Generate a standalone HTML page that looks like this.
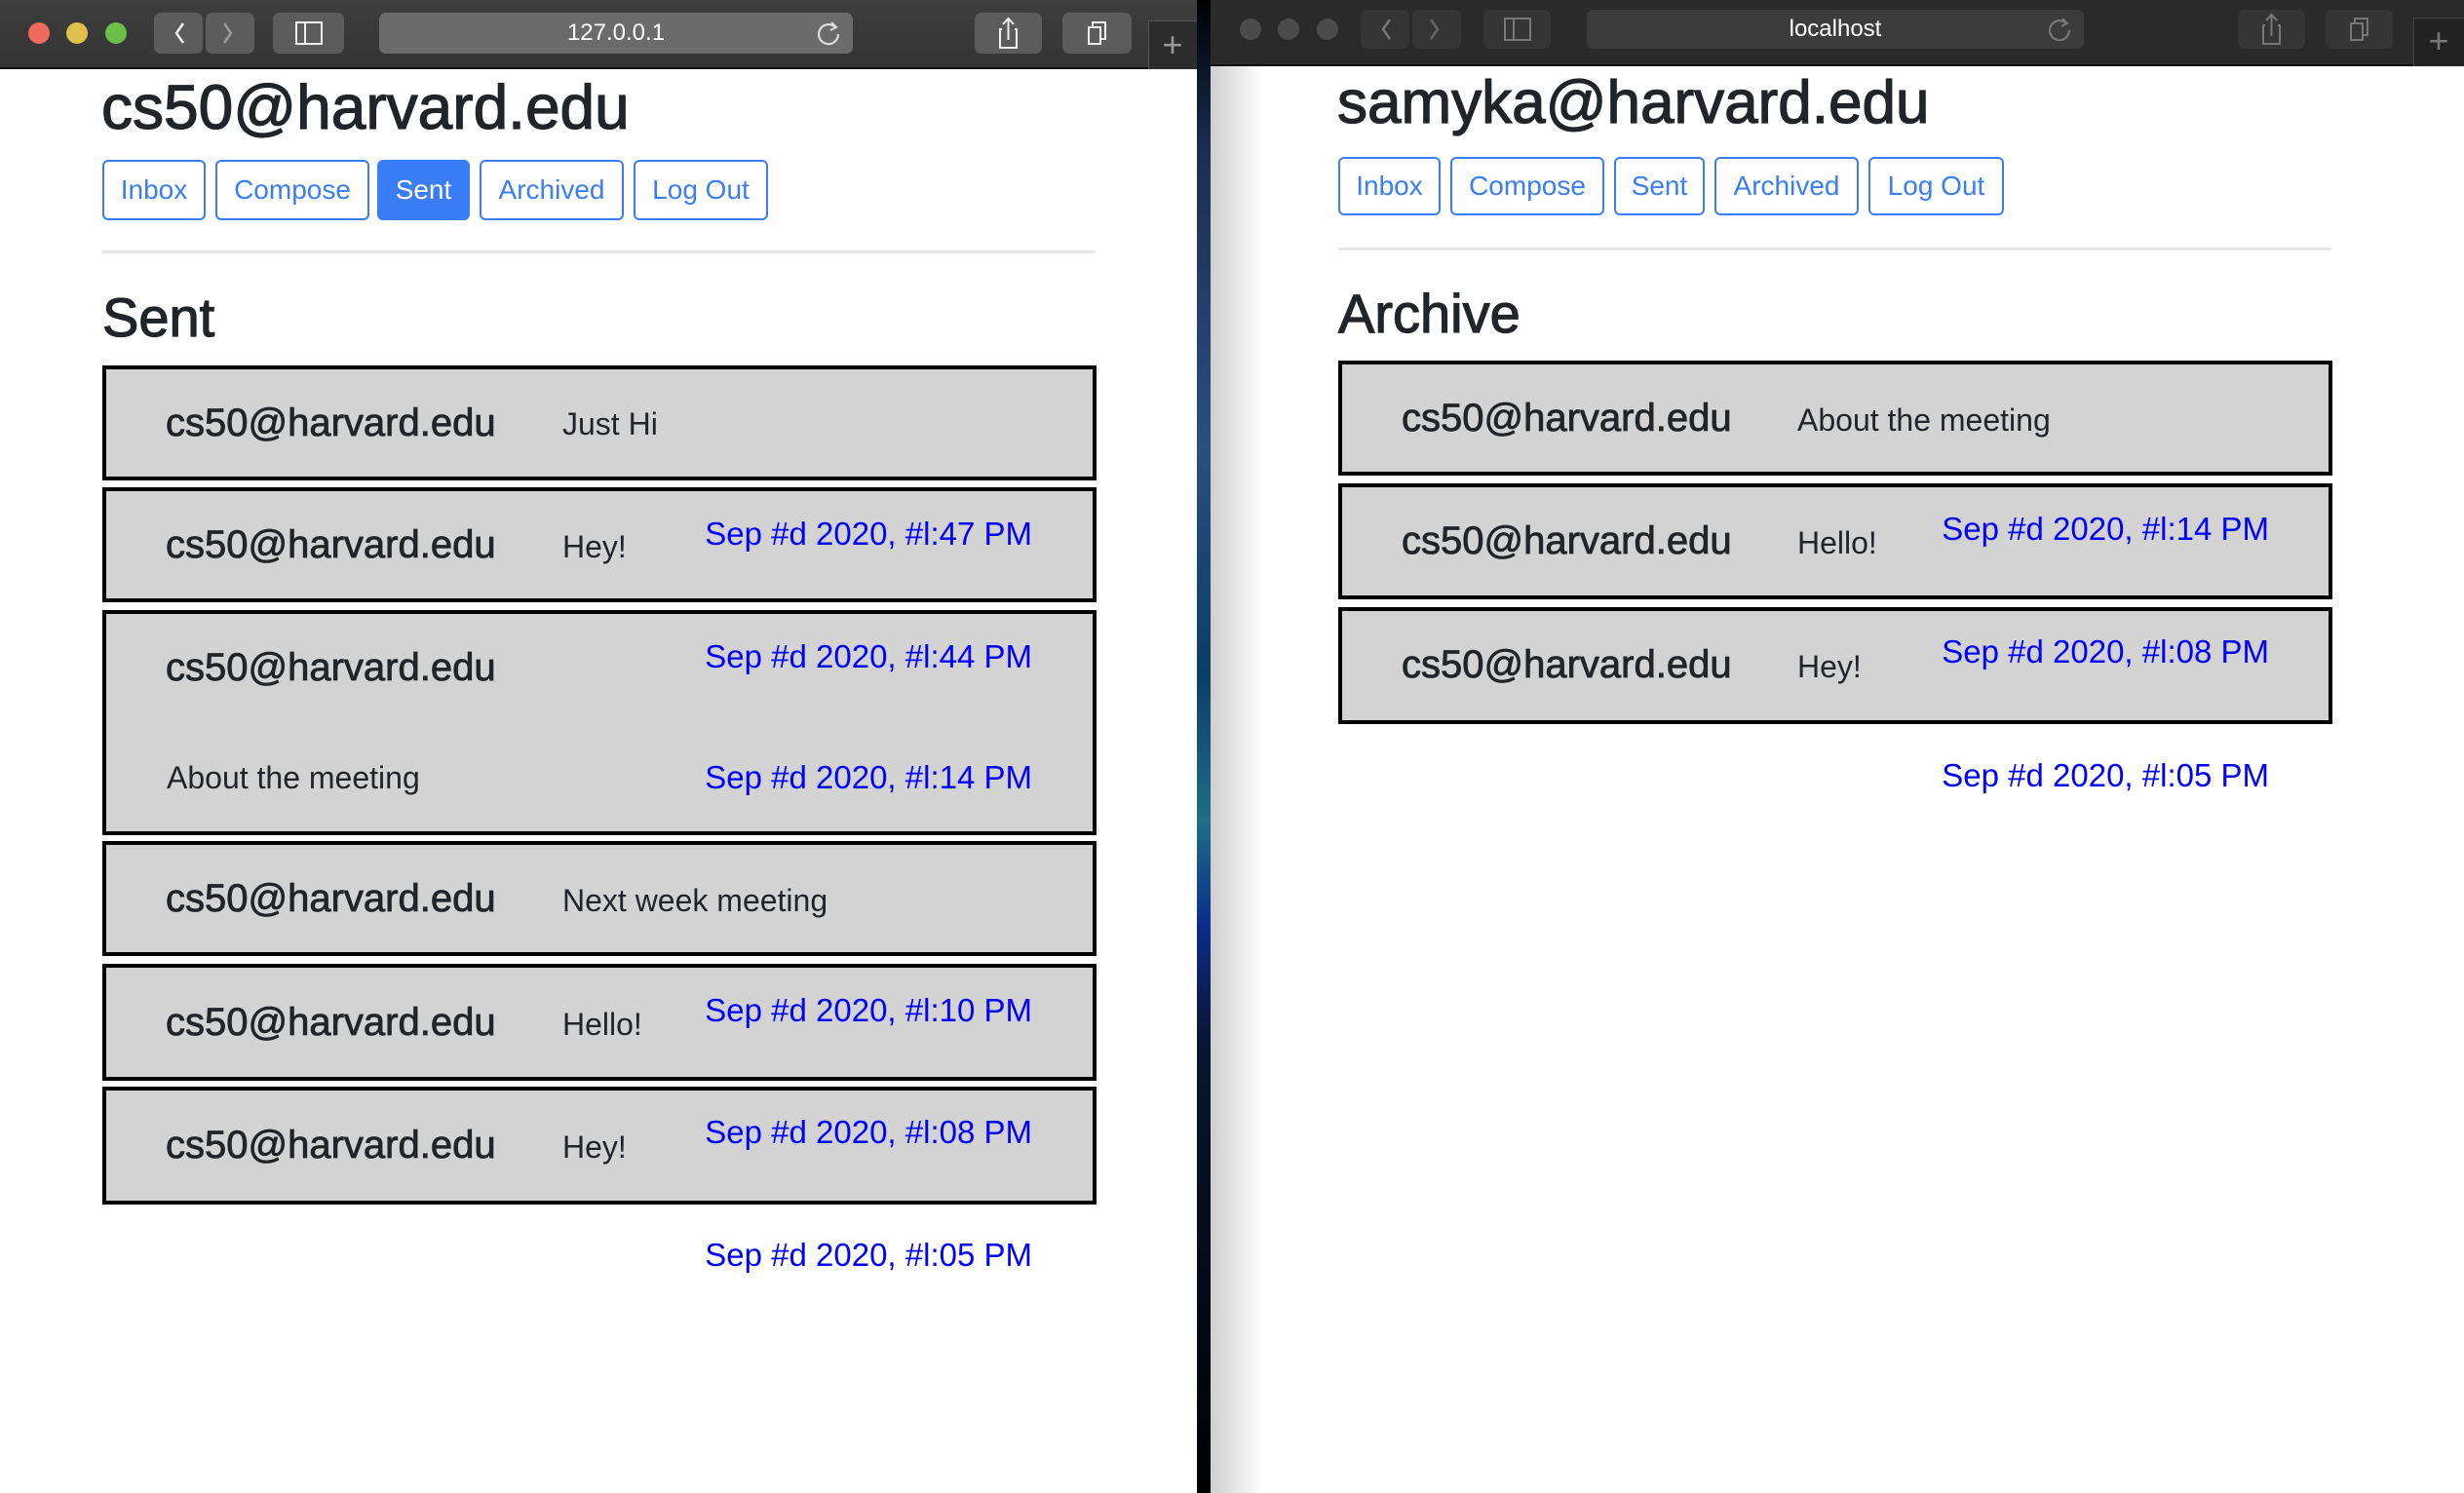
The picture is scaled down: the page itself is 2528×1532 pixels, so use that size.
<!DOCTYPE html>
<html><head><meta charset="utf-8"><style>
*{margin:0;padding:0;box-sizing:border-box}
body{width:2528px;height:1532px;position:relative;overflow:hidden;background:#000;font-family:"Liberation Sans",Arial,sans-serif;color:#212529}
.win{position:absolute;top:0;bottom:0;background:#fff;overflow:hidden}
.tb{position:absolute;left:0;right:0;top:0}
.a{position:absolute;white-space:nowrap}
.h{-webkit-text-stroke:1.2px #212529}
.btn{position:absolute;border:2px solid #3a7df6;border-radius:6px;color:#3a7df6;font-size:28px;display:flex;align-items:center;justify-content:center}
.btn.on{background:#3a7df6;color:#fff}
.hr{position:absolute;height:3px;background:#e6e6e6}
.box{position:absolute;background:#d3d3d3;border:4px solid #000}
.s{position:absolute;font-size:40px;line-height:50px;color:#212529;white-space:nowrap;-webkit-text-stroke:0.8px #212529}
.sub{position:absolute;font-size:32px;line-height:40px;color:#212529;white-space:nowrap}
.d{position:absolute;font-size:33px;line-height:40px;color:#0000ff;white-space:nowrap;text-align:right}
.tbtn{position:absolute;border-radius:7px}
</style></head><body>
<div style="position:absolute;left:1228px;top:0;width:16px;height:1532px;background:linear-gradient(#000 0%,#1c2d52 10%,#2b4f7e 30%,#0d3d63 45%,#1f6e86 55%,#0c2c8a 62%,#0a1530 70%,#000 100%)"></div>

<!-- LEFT WINDOW -->
<div class="win" style="left:0;width:1228px">
 <div class="tb" style="height:71px;background:linear-gradient(#3d3d3d,#353535);border-bottom:2px solid #111">
  <div class="a" style="left:29px;top:23px;width:22px;height:22px;border-radius:50%;background:#ec6a5e"></div>
  <div class="a" style="left:68px;top:23px;width:22px;height:22px;border-radius:50%;background:#e0c04c"></div>
  <div class="a" style="left:108px;top:23px;width:22px;height:22px;border-radius:50%;background:#6cc04a"></div>
  <div class="tbtn" style="left:158px;top:13px;width:50px;height:42px;background:#5c5c5c"></div>
  <div class="tbtn" style="left:211px;top:13px;width:50px;height:42px;background:#5c5c5c"></div>
  <svg class="a" style="left:158px;top:13px" width="103" height="42"><path d="M30 11 L23 21 L30 31" stroke="#eee" stroke-width="2.5" fill="none"/><path d="M72 11 L79 21 L72 31" stroke="#999" stroke-width="2.5" fill="none"/></svg>
  <div class="tbtn" style="left:280px;top:13px;width:73px;height:42px;background:#5c5c5c"></div>
  <svg class="a" style="left:280px;top:13px" width="73" height="42"><rect x="24" y="10" width="26" height="22" stroke="#eee" stroke-width="2" fill="none"/><line x1="33" y1="10" x2="33" y2="32" stroke="#eee" stroke-width="2"/></svg>
  <div class="tbtn" style="left:389px;top:13px;width:486px;height:42px;background:#6b6b6b"></div>
  <div class="a" style="left:389px;width:486px;top:13px;line-height:42px;text-align:center;color:#fff;font-size:24px">127.0.0.1</div>
  <svg class="a" style="left:835px;top:18px" width="32" height="32"><path d="M22 10 A10 10 0 1 0 25 17" stroke="#ddd" stroke-width="2.2" fill="none"/><path d="M18 5 L23 10 L17 13" stroke="#ddd" stroke-width="2" fill="none"/></svg>
  <div class="tbtn" style="left:1000px;top:13px;width:69px;height:42px;background:#5c5c5c"></div>
  <svg class="a" style="left:1000px;top:13px" width="69" height="42"><path d="M28 17 H26 V36 H43 V17 H41" stroke="#eee" stroke-width="2" fill="none"/><path d="M34.5 28 V7 M29 12 L34.5 6 L40 12" stroke="#eee" stroke-width="2" fill="none"/></svg>
  <div class="tbtn" style="left:1090px;top:13px;width:71px;height:42px;background:#5c5c5c"></div>
  <svg class="a" style="left:1090px;top:13px" width="71" height="42"><rect x="27" y="15" width="12" height="17" stroke="#eee" stroke-width="2" fill="none"/><path d="M31 15 V10 H44 V27 H39" stroke="#eee" stroke-width="2" fill="none"/></svg>
  <div class="a" style="left:1178px;top:21px;width:50px;height:50px;background:#2c2c2c;border-left:1px solid #555;border-top:1px solid #555"></div>
  <div class="a" style="left:1178px;top:24px;width:50px;text-align:center;color:#999;font-size:36px;line-height:44px">+</div>
 </div>
 <div class="a h" style="left:104px;top:72px;font-size:64px;line-height:76px">cs50@harvard.edu</div>
 <div class="btn" style="left:105px;top:164px;width:106px;height:62px">Inbox</div>
 <div class="btn" style="left:221px;top:164px;width:158px;height:62px">Compose</div>
 <div class="btn on" style="left:387px;top:164px;width:95px;height:62px">Sent</div>
 <div class="btn" style="left:492px;top:164px;width:148px;height:62px">Archived</div>
 <div class="btn" style="left:650px;top:164px;width:138px;height:62px">Log Out</div>
 <div class="hr" style="left:105px;top:257px;width:1019px"></div>
 <div class="a h" style="left:105px;top:294px;font-size:56px;line-height:64px">Sent</div>

 <div class="box" style="left:105px;top:375px;width:1020px;height:118px"></div>
 <div class="box" style="left:105px;top:500px;width:1020px;height:118px"></div>
 <div class="box" style="left:105px;top:626px;width:1020px;height:231px"></div>
 <div class="box" style="left:105px;top:863px;width:1020px;height:118px"></div>
 <div class="box" style="left:105px;top:989px;width:1020px;height:120px"></div>
 <div class="box" style="left:105px;top:1115px;width:1020px;height:121px"></div>

 <div class="s" style="left:170px;top:409px">cs50@harvard.edu</div><div class="sub" style="left:577px;top:415px">Just Hi</div>
 <div class="s" style="left:170px;top:534px">cs50@harvard.edu</div><div class="sub" style="left:577px;top:541px">Hey!</div><div class="d" style="right:169px;top:528px">Sep #d 2020, #l:47 PM</div>
 <div class="s" style="left:170px;top:660px">cs50@harvard.edu</div><div class="d" style="right:169px;top:654px">Sep #d 2020, #l:44 PM</div>
 <div class="sub" style="left:171px;top:778px">About the meeting</div><div class="d" style="right:169px;top:778px">Sep #d 2020, #l:14 PM</div>
 <div class="s" style="left:170px;top:897px">cs50@harvard.edu</div><div class="sub" style="left:577px;top:904px">Next week meeting</div>
 <div class="s" style="left:170px;top:1024px">cs50@harvard.edu</div><div class="sub" style="left:577px;top:1031px">Hello!</div><div class="d" style="right:169px;top:1017px">Sep #d 2020, #l:10 PM</div>
 <div class="s" style="left:170px;top:1150px">cs50@harvard.edu</div><div class="sub" style="left:577px;top:1157px">Hey!</div><div class="d" style="right:169px;top:1142px">Sep #d 2020, #l:08 PM</div>
 <div class="d" style="right:169px;top:1268px">Sep #d 2020, #l:05 PM</div>
</div>

<!-- RIGHT WINDOW -->
<div class="win" style="left:1242px;width:1286px">
 <div class="a" style="left:0;top:0;width:55px;height:1532px;background:linear-gradient(90deg,#cfcfcf,#fff)"></div>
 <div class="tb" style="height:68px;background:#2a2a2a;border-bottom:2px solid #111">
  <div class="a" style="left:30px;top:19px;width:22px;height:22px;border-radius:50%;background:#4b4b4b"></div>
  <div class="a" style="left:69px;top:19px;width:22px;height:22px;border-radius:50%;background:#4b4b4b"></div>
  <div class="a" style="left:109px;top:19px;width:22px;height:22px;border-radius:50%;background:#4b4b4b"></div>
  <div class="tbtn" style="left:154px;top:10px;width:50px;height:40px;background:#353535"></div>
  <div class="tbtn" style="left:207px;top:10px;width:50px;height:40px;background:#353535"></div>
  <svg class="a" style="left:154px;top:10px" width="103" height="40"><path d="M30 10 L23 20 L30 30" stroke="#777" stroke-width="2.5" fill="none"/><path d="M72 10 L79 20 L72 30" stroke="#666" stroke-width="2.5" fill="none"/></svg>
  <div class="tbtn" style="left:280px;top:10px;width:69px;height:40px;background:#353535"></div>
  <svg class="a" style="left:280px;top:10px" width="69" height="40"><rect x="22" y="9" width="26" height="22" stroke="#777" stroke-width="2" fill="none"/><line x1="31" y1="9" x2="31" y2="31" stroke="#777" stroke-width="2"/></svg>
  <div class="tbtn" style="left:386px;top:10px;width:510px;height:40px;background:#3c3c3c"></div>
  <div class="a" style="left:386px;width:510px;top:10px;line-height:40px;text-align:center;color:#fff;font-size:24px">localhost</div>
  <svg class="a" style="left:856px;top:14px" width="32" height="32"><path d="M22 10 A10 10 0 1 0 25 17" stroke="#777" stroke-width="2.2" fill="none"/><path d="M18 5 L23 10 L17 13" stroke="#777" stroke-width="2" fill="none"/></svg>
  <div class="tbtn" style="left:1054px;top:10px;width:69px;height:40px;background:#353535"></div>
  <svg class="a" style="left:1054px;top:10px" width="69" height="40"><path d="M28 16 H26 V35 H43 V16 H41" stroke="#777" stroke-width="2" fill="none"/><path d="M34.5 27 V6 M29 11 L34.5 5 L40 11" stroke="#777" stroke-width="2" fill="none"/></svg>
  <div class="tbtn" style="left:1144px;top:10px;width:69px;height:40px;background:#353535"></div>
  <svg class="a" style="left:1144px;top:10px" width="69" height="40"><rect x="26" y="14" width="12" height="17" stroke="#777" stroke-width="2" fill="none"/><path d="M30 14 V9 H43 V26 H38" stroke="#777" stroke-width="2" fill="none"/></svg>
  <div class="a" style="left:1234px;top:18px;width:52px;height:50px;background:#222;border-left:1px solid #444;border-top:1px solid #444"></div>
  <div class="a" style="left:1234px;top:20px;width:52px;text-align:center;color:#777;font-size:36px;line-height:44px">+</div>
 </div>
 <div class="a h" style="left:130px;top:68px;font-size:62px;line-height:76px">samyka@harvard.edu</div>
 <div class="btn" style="left:131px;top:161px;width:105px;height:60px">Inbox</div>
 <div class="btn" style="left:246px;top:161px;width:158px;height:60px">Compose</div>
 <div class="btn" style="left:414px;top:161px;width:93px;height:60px">Sent</div>
 <div class="btn" style="left:517px;top:161px;width:148px;height:60px">Archived</div>
 <div class="btn" style="left:675px;top:161px;width:139px;height:60px">Log Out</div>
 <div class="hr" style="left:131px;top:254px;width:1019px"></div>
 <div class="a h" style="left:131px;top:290px;font-size:56px;line-height:64px">Archive</div>

 <div class="box" style="left:131px;top:370px;width:1020px;height:118px"></div>
 <div class="box" style="left:131px;top:496px;width:1020px;height:119px"></div>
 <div class="box" style="left:131px;top:623px;width:1020px;height:120px"></div>

 <div class="s" style="left:196px;top:404px">cs50@harvard.edu</div><div class="sub" style="left:602px;top:411px">About the meeting</div>
 <div class="s" style="left:196px;top:530px">cs50@harvard.edu</div><div class="sub" style="left:602px;top:537px">Hello!</div><div class="d" style="right:200px;top:523px">Sep #d 2020, #l:14 PM</div>
 <div class="s" style="left:196px;top:657px">cs50@harvard.edu</div><div class="sub" style="left:602px;top:664px">Hey!</div><div class="d" style="right:200px;top:649px">Sep #d 2020, #l:08 PM</div>
 <div class="d" style="right:200px;top:776px">Sep #d 2020, #l:05 PM</div>
</div>
</body></html>
